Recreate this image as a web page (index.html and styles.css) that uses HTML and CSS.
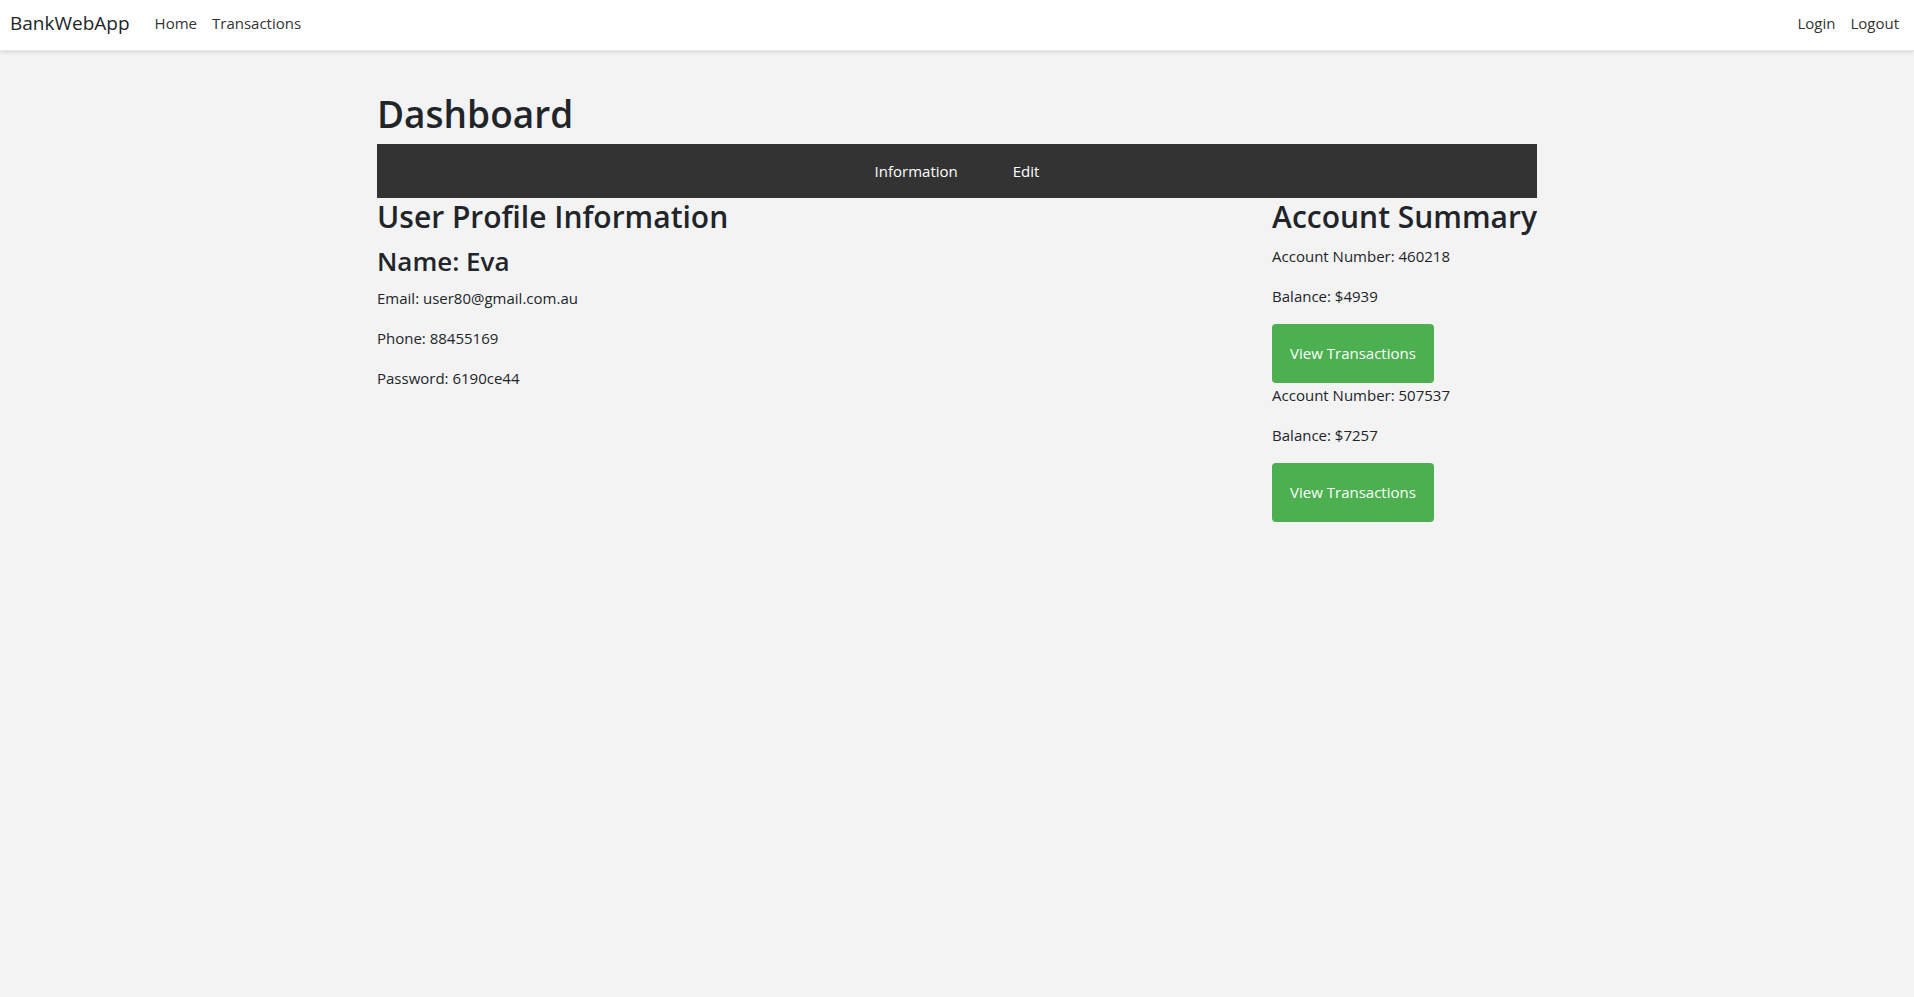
FILE: index.html
```html
<!DOCTYPE html>
<html lang="en">
<head>
<meta charset="utf-8">
<title>Dashboard - BankWebApp</title>
<link rel="stylesheet" href="styles.css">
</head>
<body>
<nav class="navbar">
  <div class="nav-left">
    <a class="brand" href="#">BankWebApp</a>
    <a class="nav-link" href="#">Home</a>
    <a class="nav-link" href="#">Transactions</a>
  </div>
  <div class="nav-right">
    <a class="nav-link" href="#">Login</a>
    <a class="nav-link" href="#">Logout</a>
  </div>
</nav>
<main class="container">
  <h1 class="page-title">Dashboard</h1>
  <div class="tabs">
    <a class="tab" href="#">Information</a>
    <a class="tab" href="#">Edit</a>
  </div>
  <div class="content">
    <section class="profile">
      <h2 class="section-title">User Profile Information</h2>
      <h3 class="name">Name: Eva</h3>
      <p class="line">Email: user80@gmail.com.au</p>
      <p class="line">Phone: 88455169</p>
      <p class="line">Password: 6190ce44</p>
    </section>
    <section class="accounts">
      <h2 class="section-title">Account Summary</h2>
      <div class="account">
        <p class="line">Account Number: 460218</p>
        <p class="line">Balance: $4939</p>
        <a class="btn" href="#">View Transactions</a>
      </div>
      <div class="account">
        <p class="line">Account Number: 507537</p>
        <p class="line">Balance: $7257</p>
        <a class="btn" href="#">View Transactions</a>
      </div>
    </section>
  </div>
</main>
</body>
</html>
```
FILE: styles.css
```css
* { box-sizing: border-box; }
html, body { margin: 0; padding: 0; }
body {
  background: #f3f3f3;
  color: #212529;
  font-family: "Segoe UI", "Open Sans", "Noto Sans", sans-serif;
  font-size: 16px;
  line-height: 24px;
}
a { text-decoration: none; color: inherit; }

.navbar {
  height: 51px;
  background: #fff;
  box-shadow: 0 1px 4px rgba(0,0,0,0.12);
  border-bottom: 1px solid #e6e6e6;
  display: flex;
  align-items: center;
  justify-content: space-between;
  padding: 0 15px 5px 10px;
}
.nav-left, .nav-right { display: flex; align-items: center; }
.brand { font-size: 19px; color: #212529; margin-right: 25px; }
.nav-left .nav-link { margin-right: 15px; }
.nav-right .nav-link { margin-left: 15px; }
.nav-link { font-size: 15px; color: #333; }

.container { width: 1160px; margin: 0 auto; }
.page-title {
  font-size: 37px;
  font-weight: 600;
  line-height: 48px;
  margin: 39px 0 6px;
}
.tabs {
  background: #333;
  height: 54px;
  display: flex;
  justify-content: center;
  align-items: center;
  gap: 55px;
}
.tab { color: #fff; font-size: 15px; }

.content { display: flex; justify-content: space-between; align-items: flex-start; }
.section-title {
  font-size: 30px;
  font-weight: 600;
  line-height: 38px;
  margin: 0 0 8px;
}
.name {
  font-size: 26px;
  font-weight: 600;
  line-height: 34px;
  margin: 0 0 8px;
}
.line { margin: 0 0 16px; font-size: 15px; }
.account { display: flex; flex-direction: column; align-items: flex-start; }
.btn {
  display: inline-block;
  background: #4caf50;
  color: #fff;
  font-size: 15px;
  line-height: 25px;
  padding: 17px 18px;
  border-radius: 4px;
  white-space: nowrap;
}
```
